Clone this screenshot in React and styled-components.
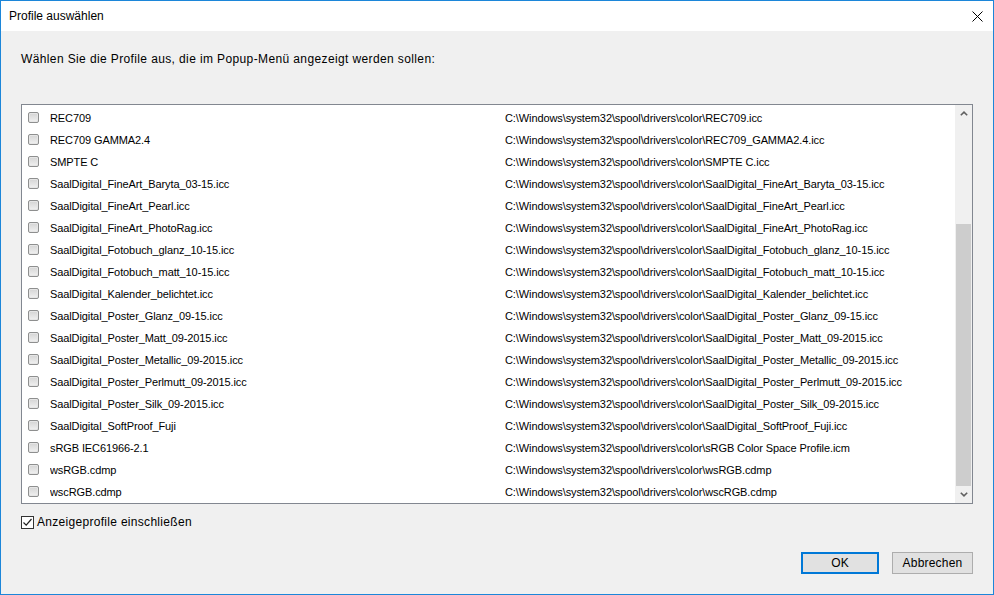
import React from "react";
import styled, { createGlobalStyle } from "styled-components";

const GlobalStyle = createGlobalStyle`
  html, body {
    margin: 0;
    padding: 0;
    background: #f0f0f0;
  }
  body {
    font-family: "Liberation Sans", Arial, sans-serif;
    color: #000;
  }
`;

const Window = styled.div`
  width: 994px;
  height: 595px;
  box-sizing: border-box;
  border: 1px solid #1c86d9;
  background: #f0f0f0;
  display: flex;
  flex-direction: column;
`;

const TitleBar = styled.div`
  height: 30px;
  background: #fff;
  display: flex;
  align-items: center;
  justify-content: space-between;
  padding-left: 8px;
  font-size: 12px;
`;

const CloseButton = styled.div`
  width: 46px;
  height: 30px;
  display: flex;
  align-items: center;
  justify-content: flex-end;
  padding-right: 10px;
  box-sizing: border-box;
`;

const Content = styled.div`
  flex: 1;
  display: flex;
  flex-direction: column;
  padding: 20px 20px 0 20px;
`;

const Prompt = styled.div`
  font-size: 12px;
  line-height: 16px;
  height: 16px;
  letter-spacing: 0.38px;
`;

const ListBox = styled.div`
  margin-top: 37px;
  height: 400px;
  box-sizing: border-box;
  border: 1px solid #828790;
  background: #fff;
  display: flex;
`;

const Rows = styled.div`
  flex: 1;
  padding-top: 1px;
  overflow: hidden;
`;

const Row = styled.div`
  height: 22px;
  display: grid;
  grid-template-columns: 28px 455px 1fr;
  align-items: center;
  font-size: 11px;
  line-height: 14px;
  padding-top: 1px;
  box-sizing: border-box;
  letter-spacing: -0.1px;
  white-space: nowrap;
`;

const ItemBox = styled.span`
  justify-self: start;
  margin-left: 6px;
  width: 9px;
  height: 9px;
  border: 1px solid #8e8f8f;
  border-radius: 2px;
  background: linear-gradient(#d4d4d4, #f1f1f1);
  box-shadow: inset 0 0 0 1px #e6e6e6;
`;

const Cell = styled.span`
  overflow: hidden;
`;

const Scrollbar = styled.div`
  width: 17px;
  background: #f0f0f0;
  display: flex;
  flex-direction: column;
`;

const ArrowButton = styled.div`
  height: 17px;
  display: flex;
  align-items: center;
  justify-content: center;
`;

const Track = styled.div`
  flex: 1;
  display: flex;
  flex-direction: column;
  padding: ${(p) => p.$offset}px 1px 0 1px;
`;

const Thumb = styled.div`
  flex: 1;
  background: #cdcdcd;
`;

const OptionRow = styled.label`
  margin-top: 10px;
  display: flex;
  align-items: center;
  gap: 3px;
  font-size: 12px;
  height: 16px;
  letter-spacing: 0.3px;
`;

const CheckBox = styled.span`
  width: 13px;
  height: 13px;
  box-sizing: border-box;
  border: 1px solid #333;
  background: #fff;
  display: flex;
  align-items: center;
  justify-content: center;
`;

const Buttons = styled.div`
  margin-top: 22px;
  display: flex;
  justify-content: flex-end;
  gap: 13px;
`;

const Button = styled.div`
  width: ${(p) => p.$w}px;
  height: 22px;
  box-sizing: border-box;
  border: ${(p) => (p.$default ? "2px solid #0078d7" : "1px solid #adadad")};
  background: #e1e1e1;
  font-size: 12px;
  letter-spacing: 0.2px;
  display: flex;
  align-items: center;
  justify-content: center;
`;

const DIR = "C:\\Windows\\system32\\spool\\drivers\\color\\";

const profiles = [
  ["REC709", "REC709.icc"],
  ["REC709 GAMMA2.4", "REC709_GAMMA2.4.icc"],
  ["SMPTE C", "SMPTE C.icc"],
  ["SaalDigital_FineArt_Baryta_03-15.icc", "SaalDigital_FineArt_Baryta_03-15.icc"],
  ["SaalDigital_FineArt_Pearl.icc", "SaalDigital_FineArt_Pearl.icc"],
  ["SaalDigital_FineArt_PhotoRag.icc", "SaalDigital_FineArt_PhotoRag.icc"],
  ["SaalDigital_Fotobuch_glanz_10-15.icc", "SaalDigital_Fotobuch_glanz_10-15.icc"],
  ["SaalDigital_Fotobuch_matt_10-15.icc", "SaalDigital_Fotobuch_matt_10-15.icc"],
  ["SaalDigital_Kalender_belichtet.icc", "SaalDigital_Kalender_belichtet.icc"],
  ["SaalDigital_Poster_Glanz_09-15.icc", "SaalDigital_Poster_Glanz_09-15.icc"],
  ["SaalDigital_Poster_Matt_09-2015.icc", "SaalDigital_Poster_Matt_09-2015.icc"],
  ["SaalDigital_Poster_Metallic_09-2015.icc", "SaalDigital_Poster_Metallic_09-2015.icc"],
  ["SaalDigital_Poster_Perlmutt_09-2015.icc", "SaalDigital_Poster_Perlmutt_09-2015.icc"],
  ["SaalDigital_Poster_Silk_09-2015.icc", "SaalDigital_Poster_Silk_09-2015.icc"],
  ["SaalDigital_SoftProof_Fuji", "SaalDigital_SoftProof_Fuji.icc"],
  ["sRGB IEC61966-2.1", "sRGB Color Space Profile.icm"],
  ["wsRGB.cdmp", "wsRGB.cdmp"],
  ["wscRGB.cdmp", "wscRGB.cdmp"],
];

const Chevron = ({ up }) => (
  <svg width="8" height="5" viewBox="0 0 8 5">
    <polyline
      points={up ? "0.8,4.3 4,1.2 7.2,4.3" : "0.8,0.7 4,3.8 7.2,0.7"}
      fill="none"
      stroke="#606060"
      strokeWidth="1.6"
    />
  </svg>
);

export default function App() {
  return (
    <>
      <GlobalStyle />
      <Window>
        <TitleBar>
          <span>Profile auswählen</span>
          <CloseButton>
            <svg width="11" height="11" viewBox="0 0 11 11">
              <path d="M0.5 0.5 L10.5 10.5 M10.5 0.5 L0.5 10.5" stroke="#000" strokeWidth="1" />
            </svg>
          </CloseButton>
        </TitleBar>
        <Content>
          <Prompt>Wählen Sie die Profile aus, die im Popup-Menü angezeigt werden sollen:</Prompt>
          <ListBox>
            <Rows>
              {profiles.map(([name, file]) => (
                <Row key={name}>
                  <ItemBox />
                  <Cell>{name}</Cell>
                  <Cell>{DIR + file}</Cell>
                </Row>
              ))}
            </Rows>
            <Scrollbar>
              <ArrowButton>
                <Chevron up />
              </ArrowButton>
              <Track $offset={102}>
                <Thumb />
              </Track>
              <ArrowButton>
                <Chevron />
              </ArrowButton>
            </Scrollbar>
          </ListBox>
          <OptionRow>
            <CheckBox>
              <svg width="11" height="11" viewBox="0 0 11 11">
                <polyline points="1.5,5.5 4.2,8.2 9.5,2" fill="none" stroke="#222" strokeWidth="1.2" />
              </svg>
            </CheckBox>
            Anzeigeprofile einschließen
          </OptionRow>
          <Buttons>
            <Button $default $w={78}>OK</Button>
            <Button $w={81}>Abbrechen</Button>
          </Buttons>
        </Content>
      </Window>
    </>
  );
}
